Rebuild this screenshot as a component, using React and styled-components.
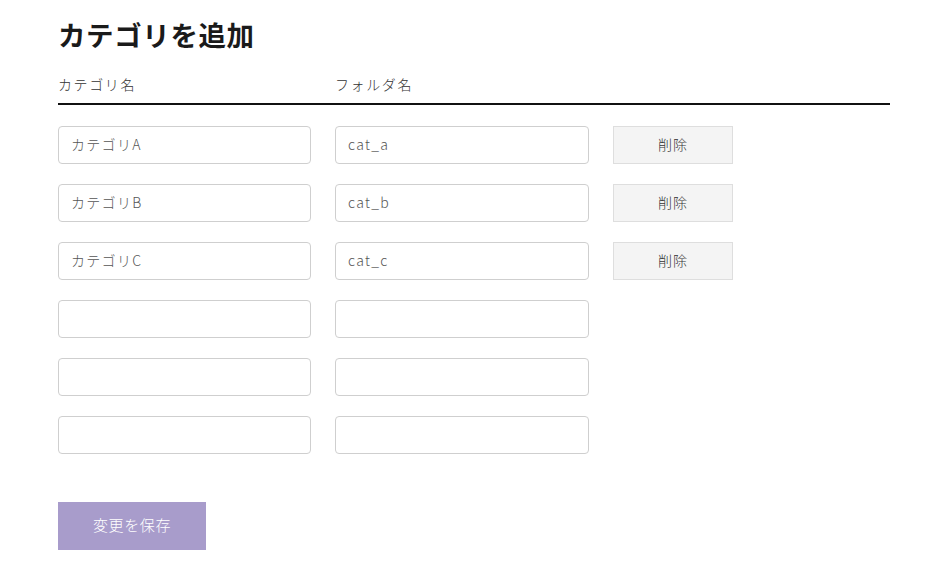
import React from "react";
import styled, { createGlobalStyle } from "styled-components";

const Global = createGlobalStyle`
  html, body { margin: 0; padding: 0; background: #fff; }
  body { font-family: "Noto Sans CJK JP", "Noto Sans", sans-serif; color: #222; }
  * { box-sizing: border-box; }
`;

const Page = styled.div`
  width: 832px;
  margin-left: 58px;
  padding-top: 14px;
`;

const Title = styled.h1`
  margin: 0;
  font-size: 27.5px;
  font-weight: 700;
  line-height: 40px;
  color: #1a1a1a;
  letter-spacing: 0.6px;
`;

const HeaderRow = styled.div`
  display: grid;
  grid-template-columns: 253px 254px;
  column-gap: 24px;
  margin-top: 20px;
  padding-bottom: 9px;
  border-bottom: 2px solid #111;
`;

const HeaderCell = styled.div`
  font-size: 14px;
  font-weight: 300;
  line-height: 20px;
  color: #333;
  letter-spacing: 1.6px;
`;

const Rows = styled.div`
  display: flex;
  flex-direction: column;
  gap: 20px;
  margin-top: 21px;
`;

const Row = styled.div`
  display: grid;
  grid-template-columns: 253px 254px 120px;
  column-gap: 24px;
  align-items: center;
`;

const Input = styled.input`
  height: 38px;
  width: 100%;
  border: 1px solid #cfcfcf;
  border-radius: 4px;
  padding: 0 12px 3px;
  font-family: "Noto Sans CJK JP", "Noto Sans", sans-serif;
  font-size: 14px;
  font-weight: 300;
  color: #555;
  letter-spacing: 1.3px;
  background: #fff;
  outline: none;
`;

const DeleteButton = styled.button`
  height: 38px;
  width: 120px;
  padding: 0 0 3px;
  border: 1px solid #dedede;
  background: #f4f4f4;
  font-family: "Noto Sans CJK JP", "Noto Sans", sans-serif;
  font-size: 14px;
  font-weight: 300;
  color: #333;
  letter-spacing: 1px;
  cursor: pointer;
`;

const SaveButton = styled.button`
  margin-top: 48px;
  width: 148px;
  height: 48px;
  padding: 0 0 4px;
  border: none;
  background: #a89ccb;
  color: #fff;
  font-family: "Noto Sans CJK JP", "Noto Sans", sans-serif;
  font-size: 15px;
  font-weight: 300;
  letter-spacing: 0.6px;
  cursor: pointer;
`;

const rows = [
  { name: "カテゴリA", folder: "cat_a" },
  { name: "カテゴリB", folder: "cat_b" },
  { name: "カテゴリC", folder: "cat_c" },
  { name: "", folder: "" },
  { name: "", folder: "" },
  { name: "", folder: "" },
];

export default function App() {
  return (
    <>
      <Global />
      <Page>
        <Title>カテゴリを追加</Title>
        <HeaderRow>
          <HeaderCell>カテゴリ名</HeaderCell>
          <HeaderCell>フォルダ名</HeaderCell>
        </HeaderRow>
        <Rows>
          {rows.map((r, i) => (
            <Row key={i}>
              <Input defaultValue={r.name} />
              <Input defaultValue={r.folder} />
              {r.name ? <DeleteButton>削除</DeleteButton> : <span />}
            </Row>
          ))}
        </Rows>
        <SaveButton>変更を保存</SaveButton>
      </Page>
    </>
  );
}
